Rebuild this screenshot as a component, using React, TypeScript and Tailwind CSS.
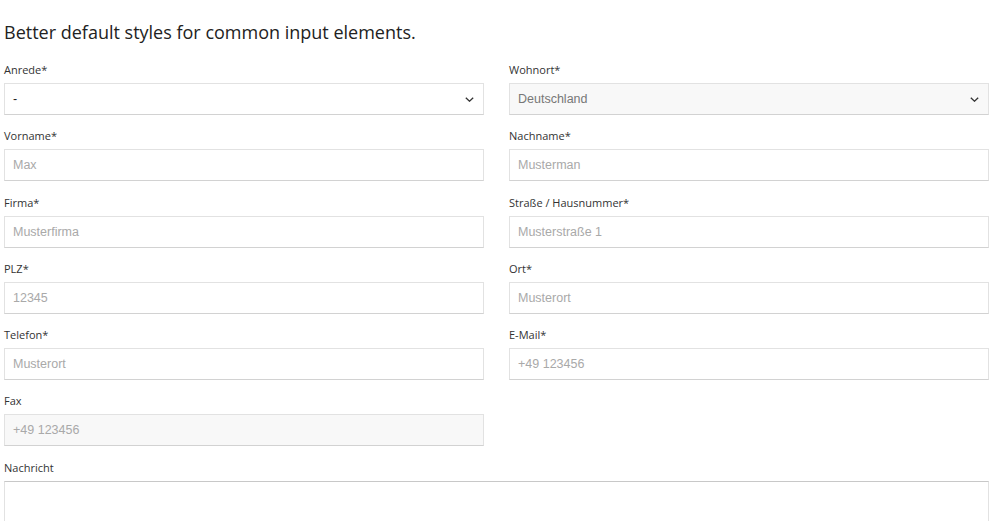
import { ReactNode } from "react";

const labelCls = "block text-[11px] leading-4 text-[#333] mb-[5px] [font-family:'Open_Sans',sans-serif]";
const fieldCls =
  "w-full h-[32px] border border-[#e2e2e2] border-b-[#d2d2d2] pl-2 pr-3 text-[12.5px] [font-family:'Liberation_Sans',Arial,sans-serif] flex items-center";

function Chevron() {
  return (
    <svg width="9" height="5" viewBox="0 0 9 5" className="absolute right-[10px] top-[14px]">
      <polyline points="0.8,0.8 4.5,4.2 8.2,0.8" fill="none" stroke="#333" strokeWidth="1.3" />
    </svg>
  );
}

function Field({ label, children }: { label: string; children: ReactNode }) {
  return (
    <div className="mb-[13.3px]">
      <label className={labelCls}>{label}</label>
      {children}
    </div>
  );
}

function TextInput({ placeholder, disabled }: { placeholder: string; disabled?: boolean }) {
  return (
    <input
      type="text"
      placeholder={placeholder}
      disabled={disabled}
      className={`${fieldCls} placeholder:text-[#a9a9a9] outline-none ${disabled ? "bg-[#f8f8f8]" : "bg-white"}`}
    />
  );
}

function SelectBox({ value, disabled }: { value: string; disabled?: boolean }) {
  return (
    <div className="relative">
      <div className={`${fieldCls} ${disabled ? "bg-[#f8f8f8] text-[#777]" : "bg-white text-[#222]"}`}>{value}</div>
      <Chevron />
    </div>
  );
}

export default function App() {
  return (
    <div className="bg-white min-h-[521px] w-[1000px] overflow-hidden">
      <div className="ml-[4px] w-[985px]">
        <h1 className="pt-[20px] mb-[18px] text-[18px] leading-6 text-[#222] [font-family:'Open_Sans',sans-serif]">
          Better default styles for common input elements.
        </h1>
        <div className="grid grid-cols-2 gap-x-[25px]">
          <Field label="Anrede*">
            <SelectBox value="-" />
          </Field>
          <Field label="Wohnort*">
            <SelectBox value="Deutschland" disabled />
          </Field>
          <Field label="Vorname*">
            <TextInput placeholder="Max" />
          </Field>
          <Field label="Nachname*">
            <TextInput placeholder="Musterman" />
          </Field>
          <Field label="Firma*">
            <TextInput placeholder="Musterfirma" />
          </Field>
          <Field label="Straße / Hausnummer*">
            <TextInput placeholder="Musterstraße 1" />
          </Field>
          <Field label="PLZ*">
            <TextInput placeholder="12345" />
          </Field>
          <Field label="Ort*">
            <TextInput placeholder="Musterort" />
          </Field>
          <Field label="Telefon*">
            <TextInput placeholder="Musterort" />
          </Field>
          <Field label="E-Mail*">
            <TextInput placeholder="+49 123456" />
          </Field>
          <Field label="Fax">
            <TextInput placeholder="+49 123456" disabled />
          </Field>
          <div />
        </div>
        <div>
          <label className={labelCls}>Nachricht</label>
          <textarea className="w-full h-[80px] border border-[#e2e2e2] border-t-[#c8c8c8] outline-none resize-none block" />
        </div>
      </div>
    </div>
  );
}
